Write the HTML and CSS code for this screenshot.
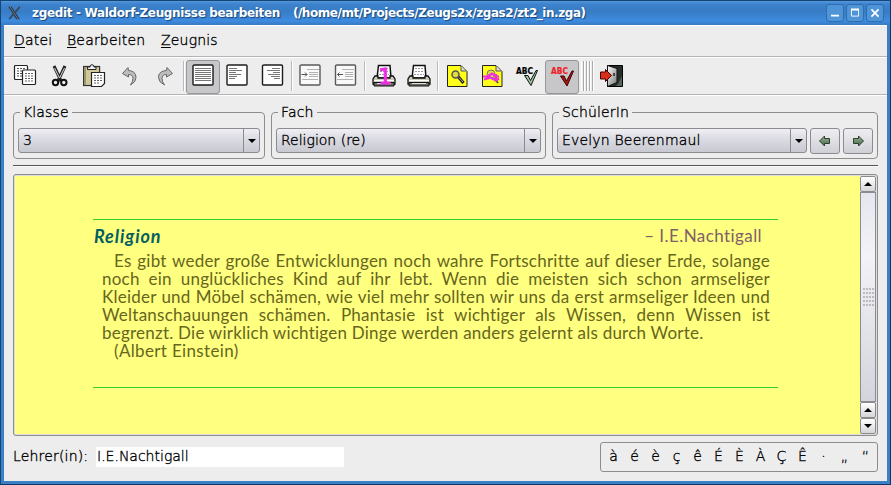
FILE: index.html
```html
<!DOCTYPE html>
<html lang="de">
<head>
<meta charset="utf-8">
<title>zgedit - Waldorf-Zeugnisse bearbeiten</title>
<link rel="stylesheet" href="styles.css">
</head>
<body>
<svg width="0" height="0" class="defs">
  <defs>
    <linearGradient id="door" x1="0" y1="0" x2="1" y2="1"><stop offset="0" stop-color="#fff"/><stop offset="1" stop-color="#777"/></linearGradient>
    <linearGradient id="green" x1="0" y1="0" x2="0" y2="1"><stop offset="0" stop-color="#9bb69b"/><stop offset="1" stop-color="#456545"/></linearGradient>
    <g id="printer">
      <path d="M5 14 6.500 1.500H18L19 14Z" fill="#fff" stroke="#111" stroke-width="1.500"/>
      <path d="M8 4.500h8M8 7.500h8M7 10.500h10" stroke="#999" stroke-dasharray="2 1"/>
      <path d="M3 12h3v2h12v-2h3l2 3v5H1v-5Z" fill="#c8cbb9" stroke="#111" stroke-width="1.300"/>
      <path d="M2 16.500h20" stroke="#fff"/><path d="M2 18.500h20v3.500H2z" fill="#6c6e64" stroke="#111"/>
      <path d="M5 19.500h14" stroke="#ddd"/>
    </g>
    <path id="note" d="M2.500 1.500H16L22 7.500V22.500H2.500Z" fill="#ffff1a" stroke="#222"/>
    <path id="sheet" d="M2.500 1H20q1 0 1 1V20q0 1-1 1H2q-1 0-1-1V2q0-1 1.500-1Z" fill="#fff" stroke="#1c1c1c" stroke-width="1.400"/>
  </defs>
</svg>
<div class="window">
  <header class="titlebar">
    <svg class="logo" viewBox="0 0 16 18"><path d="M1 2h4l9 14h-4Z" fill="#2b3545"/><path d="M14 2 9 8M7 10 2 16" stroke="#39495d" stroke-width="2"/><path d="M3 2 12 16" stroke="#768493"/></svg>
    <span class="name">zgedit - Waldorf-Zeugnisse bearbeiten</span><span class="path">(/home/mt/Projects/Zeugs2x/zgas2/zt2_in.zga)</span>
    <div class="wbtns">
      <svg viewBox="0 0 18 18"><path d="M4.500 12h9" stroke="#fff" stroke-width="2"/></svg>
      <svg viewBox="0 0 18 18"><path d="M5 5.500h8v7H5Z" fill="none" stroke="#fff"/><path d="M4.500 5h9" stroke="#fff" stroke-width="2"/></svg>
      <svg viewBox="0 0 18 18"><path d="m5 5 8 8M13 5l-8 8" stroke="#fff" stroke-width="2"/></svg>
    </div>
  </header>
  <div class="client">
    <nav class="menu"><span class="m1"><u>D</u>atei</span><span class="m2"><u>B</u>earbeiten</span><span class="m3"><u>Z</u>eugnis</span></nav>
    <div class="toolbar">
      <button><svg viewBox="0 0 24 24"><rect x="1.500" y="1.500" width="13" height="14" rx="1" fill="#fff" stroke="#222" stroke-width="1.200"/><path d="M4 4.500h8M4 7h8M4 9.500h8M4 12h5" stroke="#555" stroke-dasharray="2 1"/><rect x="9.500" y="6" width="13" height="14.500" rx="1" fill="#fff" stroke="#222" stroke-width="1.200"/><path d="M12 9.500h8M12 12h8M12 14.500h8M12 17h8" stroke="#666" stroke-dasharray="2 1"/></svg></button>
      <button><svg viewBox="0 0 24 24"><path d="M6 2 13 17M17 2 10 17" stroke="#222" stroke-width="3"/><path d="m6.500 4 5 10M16.500 4l-5 10" stroke="#ddd"/><circle cx="7.500" cy="18.500" r="2.700" fill="none" stroke="#111" stroke-width="2"/><circle cx="15.800" cy="18.500" r="2.700" fill="none" stroke="#111" stroke-width="2"/></svg></button>
      <button><svg viewBox="0 0 24 24"><rect x=".6" y="2.500" width="16" height="19" fill="#cfc899" stroke="#333" stroke-width="1.200"/><path d="M2 3v18" stroke="#9d966b" stroke-width="2"/><path d="M4.500 5.500V3H7q0-2.300 2-2.300T11 3h2v2.500Z" fill="#eee" stroke="#222"/><path d="M8.500 8.500h13v11l-3 3h-10Z" fill="#fff" stroke="#222" stroke-width="1.200"/><path d="M11 11.500h8M11 14h8M11 16.500h8M11 19h5" stroke="#666" stroke-dasharray="2 1"/></svg></button>
      <button><svg viewBox="0 0 24 24"><path d="M10 3.500 4.500 9.500l6 3.500v-2.500q4.500 0 4.500 4 0 3-2.500 6.500 5.500-3 5.500-7.500 0-6.500-7.500-7Z" fill="#bdbdbd" stroke="#666"/></svg></button>
      <button><svg viewBox="0 0 24 24"><path d="M14 3.500 19.500 9.500l-6 3.500v-2.500q-4.500 0-4.500 4 0 3 2.500 6.500-6-3-6-7.500 0-6.500 8-7Z" fill="#bdbdbd" stroke="#666"/></svg></button>
      <i class="sep"></i>
      <button class="on"><svg viewBox="0 0 24 24"><use href="#sheet" x="1"/><path d="M4 4.500h16M4 6.500h16M4 8.500h16M4 10.500h16M4 12.500h16M4 14.500h16M4 16.500h16" stroke="#777"/></svg></button>
      <button><svg viewBox="0 0 24 24"><use href="#sheet"/><path d="M3 4.500h8M3 6.500h13M3 8.500h7M3 10.500h12M3 12.500h8M3 14.500h6" stroke="#777"/></svg></button>
      <button><svg viewBox="0 0 24 24"><use href="#sheet" x=".5"/><path d="M11 4.500h8M6 6.500h13M12 8.500h7M7 10.500h12M10 12.500h9M13 14.500h6" stroke="#777"/></svg></button>
      <i class="sep"></i>
      <button class="dim"><svg viewBox="0 0 24 24"><use href="#sheet"/><path d="M8 5.500h12M10 8.500h9M10 10.500h9M10 12.500h9M3 15.500h16" stroke="#999"/><path d="M2.500 10.500H8M6 8.500 8 10.500 6 12.500" fill="none" stroke="#111"/></svg></button>
      <button class="dim"><svg viewBox="0 0 24 24"><use href="#sheet" x=".5"/><path d="M8 5.500h12M11 8.500h8M11 10.500h8M11 12.500h8M3 15.500h16" stroke="#999"/><path d="M3.500 10.500H9M5.500 8.500 3.500 10.500 5.500 12.500" fill="none" stroke="#111"/></svg></button>
      <i class="sep"></i>
      <button><svg viewBox="0 0 24 24"><use href="#printer"/><text x="6" y="20" class="one">1</text></svg></button>
      <button><svg viewBox="0 0 24 24"><use href="#printer"/></svg></button>
      <i class="sep"></i>
      <button><svg viewBox="0 0 24 24"><use href="#note"/><path d="M16 2v5h5" fill="#ddd" stroke="#555"/><circle cx="10.500" cy="10.500" r="3.500" fill="#dddd42" stroke="#555" stroke-width="1.500"/><path d="m13.500 13 5 6" stroke="#222" stroke-width="3"/><path d="m14 13.500 4 4.500" stroke="#aaa"/></svg></button>
      <button><svg viewBox="0 0 24 24"><use href="#note"/><path d="M16 2v5h5" fill="#ddd" stroke="#555"/><circle cx="11" cy="10" r="4" fill="#dddd42" stroke="#777"/><path d="m14 14 4 5" stroke="#555" stroke-width="2"/><path d="M3 12.500h5l4-3 4 3h3M4 15.500l6-2 6 3 3-2M16 10v5M10 10l-2 5" fill="none" stroke="#f02be5" stroke-width="2.200"/></svg></button>
      <button><svg viewBox="0 0 24 24"><text x="1" y="10" class="abc" textLength="17" lengthAdjust="spacingAndGlyphs">ABC</text><path d="M9.500 11.500h3.500l2.500 5L21 6.500h1.500L16 21.500Z" fill="#9fc5a6" stroke="#111"/></svg></button>
      <button class="on"><svg viewBox="0 0 24 24"><text x="1" y="10" class="abc red" textLength="17" lengthAdjust="spacingAndGlyphs">ABC</text><path d="M10.500 12h3.500l2.500 5L22 7h1.500L17 22Z" fill="#a31a12" stroke="#400"/></svg></button>
      <i class="grip"></i>
      <button><svg viewBox="0 0 24 24"><path d="M8.500 1.500h15v21h-15Z" fill="#26302a" stroke="#000"/><path d="M19 20 23 12v10h-6Z" fill="#58645a"/><path d="M8.500 1.500 18 4.500v14l-9.500 4Z" fill="url(#door)" stroke="#111"/><path d="M1.500 8h5V5.500l6 6-6 6V15h-5Z" fill="#d92e1c" stroke="#400"/><path d="M15 9v3" stroke="#222" stroke-width="1.500"/></svg></button>
    </div>
    <section class="groups">
      <fieldset class="g1"><legend>Klasse</legend><div class="combo"><span>3</span><b></b></div></fieldset>
      <fieldset class="g2"><legend>Fach</legend><div class="combo"><span>Religion (re)</span><b></b></div></fieldset>
      <fieldset class="g3"><legend>SchülerIn</legend><div class="combo wide"><span>Evelyn Beerenmaul</span><b></b></div>
        <div class="step"><svg viewBox="0 0 14 12"><path d="M1.500 6 6.500 1v2.500h5v5h-5V11Z" fill="url(#green)" stroke="#2d402d"/></svg></div>
        <div class="step"><svg viewBox="0 0 14 12"><path d="M12.500 6 7.500 1v2.500h-5v5h5V11Z" fill="url(#green)" stroke="#2d402d"/></svg></div></fieldset>
    </section>
    <div class="rule"></div>
    <main class="editor">
      <div class="page">
        <article>
          <div class="head"><strong>Religion</strong><span>– I.E.Nachtigall</span></div>
          <div class="body">
            <p class="in">Es gibt weder große Entwicklungen noch wahre Fortschritte auf dieser Erde, solange</p>
            <p>noch ein unglückliches Kind auf ihr lebt. Wenn die meisten sich schon armseliger</p>
            <p>Kleider und Möbel schämen, wie viel mehr sollten wir uns da erst armseliger Ideen und</p>
            <p>Weltanschauungen schämen. Phantasie ist wichtiger als Wissen, denn Wissen ist</p>
            <p class="last">begrenzt. Die wirklich wichtigen Dinge werden anders gelernt als durch Worte.</p>
            <p class="sig">(Albert Einstein)</p>
          </div>
        </article>
      </div>
      <div class="scroll"><i class="up"></i><div class="thumb"><span></span></div><i class="up"></i><i class="down"></i></div>
    </main>
    <footer><label>Lehrer(in):</label><div class="input">I.E.Nachtigall</div>
      <div class="chars"><span>à</span><span>é</span><span>è</span><span>ç</span><span>ê</span><span>É</span><span>È</span><span>À</span><span>Ç</span><span>Ê</span><span>·</span><span>„</span><span>“</span></div>
    </footer>
  </div>
</div>
</body>
</html>
```
FILE: styles.css
```css
* { box-sizing: border-box; }
body { margin: 0; font: 200 14px/18px "DejaVu Sans", "DejaVu Sans Light", sans-serif; color: #000; }
.menu, .groups, footer { -webkit-text-stroke: .35px #000; }
.defs { display: block; position: absolute; }
.window { width: 891px; height: 485px; padding: 0 3px 3px; background: #3b7fc6; border: 1px solid #154678; border-right-color: #0c3864; border-bottom-color: #0c3864; }
.titlebar { height: 24px; margin: 0 -3px; padding: 0 3px 0 3px; display: flex; align-items: center; background: linear-gradient(#5498dc 0, #3d83cd 3px, #377cc4 10px, #3e8be0 20px, #3779c0 24px); color: #fff; font-weight: bold; font-size: 12px; text-shadow: 1px 1px 1px #174478; white-space: pre; }
.logo { width: 15px; height: 16px; margin: 0 10px 0 3px; }
.name { letter-spacing: -.34px; }
.path { margin-left: 13px; letter-spacing: -.45px; }
.wbtns { margin-left: auto; display: flex; gap: 2px; padding-right: 3px; }
.wbtns svg { width: 18px; height: 18px; border-radius: 3px; background: #5094d8; border: 1px solid #2d6db2; }
.client { height: 456px; background: #ededed; border-top: 1px solid #fff; }
.menu { height: 30px; padding: 4px 0 0 10px; display: flex; font-size: 14px; line-height: 20px; letter-spacing: .18px; }
.menu u { text-underline-offset: 2px; }
.m1 { width: 53px; } .m2 { width: 94px; }
.toolbar { height: 39px; border-top: 1px solid #b4b4b4; border-bottom: 1px solid #b4b4b4; box-shadow: inset 0 1px #fff, 0 1px #fff; padding: 3px 0 0 4px; display: flex; gap: 1px; }
.toolbar button { width: 34px; height: 34px; flex: none; padding: 0 0 0 4px; margin: 0; border: 1px solid transparent; border-radius: 3px; background: none; display: flex; align-items: flex-start; }
.toolbar button svg { width: 24px; height: 24px; display: block; margin-top: 3px; overflow: visible; }
.toolbar .on { background: #c7c7ca; border-color: #96969b; }
.toolbar .dim svg { opacity: .7; }
.sep { flex: none; width: 2px; height: 30px; margin-top: 1px; border-left: 1px solid #b9b9b9; border-right: 1px solid #fff; }
.grip { flex: none; width: 13px; height: 30px; margin: 1px -1px 0 1px; background: repeating-linear-gradient(90deg, #fff 0 1px, #ededed 1px 2px, #aaa 2px 3px); }
.one { font: 22px "DejaVu Sans Mono"; fill: #f02be5; stroke: #f02be5; }
.abc { font: bold 8.500px "DejaVu Sans"; fill: #000; stroke: #000; stroke-width: .2px; }
.abc.red { fill: #f01e28; stroke: #f01e28; }
.groups { height: 68px; padding: 8px 9px 0; display: flex; gap: 6px; }
fieldset { margin: 0; padding: 7px 4px 0; height: 56px; min-width: 0; border: 1px solid #8d8d8d; border-radius: 4px; display: flex; gap: 3px; }
legend { padding: 0 3px; margin-left: 2px; height: 18px; letter-spacing: .15px; }
.g1 { width: 252px; } .g2 { width: 275px; } .g3 { width: 326px; }
.combo { flex: 1; height: 25px; border: 1px solid #8b8b90; border-radius: 3px; background: linear-gradient(#f0f0f4, #dedee6 35%, #c8c8d0); display: flex; line-height: 22px; }
.combo span { flex: 1; padding-left: 4px; white-space: nowrap; }
.wide span { letter-spacing: .18px; }
.combo b { width: 16px; border-left: 1px solid #8b8b90; display: grid; place-items: center; }
.combo b::after, .down::after { content: ""; border: 4px solid transparent; border-top: 4px solid #000; border-bottom: 0; }
.step { width: 30px; height: 26px; border: 1px solid #8b8b90; border-radius: 3px; background: linear-gradient(#eeeef2, #cfcfd6); display: grid; place-items: center; }
.step svg { width: 14px; height: 12px; }
.rule { height: 2px; margin: 2px 9px 7px; border-top: 1px solid #555; border-bottom: 1px solid #fafafa; }
.editor { height: 262px; margin: 0 9px; border: 1px solid #8d8d8d; border-radius: 3px; display: flex; padding: 1px; background: #ddd; }
.page { flex: 1; background: #ffff80; padding: 43px 0 0 78px; }
article { width: 685px; height: 169px; border-top: 1px solid #32cd32; border-bottom: 1px solid #32cd32; font-family: Lato, sans-serif; font-weight: 400; font-size: 17px; line-height: 18px; color: #66661c; letter-spacing: .23px; }
.head { display: flex; justify-content: space-between; padding: 7px 16px 0 1px; height: 32px; }
.head strong { color: #046060; font-style: italic; font-size: 18px; letter-spacing: .9px; }
.head span { color: #806068; letter-spacing: .42px; }
.body { width: 668px; margin-left: 9px; }
p { margin: 0; text-align: justify; text-align-last: justify; white-space: nowrap; }
.in { padding-left: 12px; }
.last, .sig { text-align-last: left; }
.sig { padding-left: 12px; letter-spacing: .35px; }
.scroll { width: 16px; background: #ededed; display: flex; flex-direction: column; }
.scroll i { width: 16px; height: 16px; border: 1px solid #8b8b8b; border-radius: 2px; background: linear-gradient(#fff, #d5d5da); display: grid; place-items: center; }
.up::after { content: ""; border: 4px solid transparent; border-bottom: 4px solid #000; border-top: 0; }
.thumb { flex: 1; width: 16px; border: 1px solid #8b8b90; background: linear-gradient(#e6e6ee, #f2f2f8 30%, #d4d4dc); display: grid; place-items: center; }
.thumb span { width: 11px; height: 19px; background: radial-gradient(circle at 1px 1px, #bbb 1px, transparent 1.200px) 0 0 / 3px 4px; }
footer { padding: 6px 9px 0; display: flex; align-items: flex-start; }
label { width: 83px; padding-top: 5px; white-space: nowrap; letter-spacing: .18px; }
.input { width: 248px; height: 20px; background: #fff; margin-top: 5px; padding-left: 1px; line-height: 18px; }
.chars { margin-left: auto; width: 278px; height: 30px; border: 1px solid #8d8d8d; border-radius: 3px; padding: 4px 0 0 2px; display: flex; }
.chars span { width: 21px; text-align: center; }
```
